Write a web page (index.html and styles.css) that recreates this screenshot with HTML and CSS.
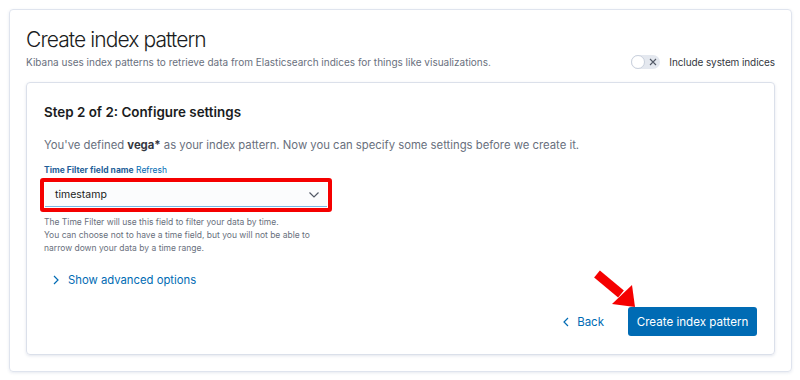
FILE: index.html
```html
<!DOCTYPE html>
<html>
  <head>
    <title>Create index pattern</title>
    <link rel="stylesheet" href="styles.css">
  </head>
  <body>
    <div class="page">
      <div class="header">
        <div>
          <h1 class="title">Create index pattern</h1>
          <p class="subtitle">Kibana uses index patterns to retrieve data from Elasticsearch indices for things like visualizations.</p>
        </div>
        <div class="switch-row">
          <span class="switch">
            <span class="knob"></span>
            <svg class="switch-x" width="8" height="8" viewBox="0 0 8 8"><path d="M1 1L7 7M7 1L1 7" stroke="#535966" stroke-width="1.1" fill="none"/></svg>
          </span>
          <span class="switch-label">Include system indices</span>
        </div>
      </div>

      <div class="panel">
        <h2 class="step">Step 2 of 2: Configure settings</h2>
        <p class="lead">You've defined <b>vega*</b> as your index pattern. Now you can specify some settings before we create it.</p>

        <div class="field">
          <div class="label"><b>Time Filter field name</b> <span class="link">Refresh</span></div>
          <div class="highlight">
            <div class="select">
              <span>timestamp</span>
              <svg width="12" height="8" viewBox="0 0 12 8"><path d="M1.5 1.5L6 6L10.5 1.5" stroke="#535966" stroke-width="1.2" fill="none"/></svg>
            </div>
          </div>
          <div class="help">
            The Time Filter will use this field to filter your data by time.<br>
            You can choose not to have a time field, but you will not be able to<br>
            narrow down your data by a time range.
          </div>
        </div>

        <div class="advanced">
          <svg width="8" height="10" viewBox="0 0 8 10"><path d="M2 1L6 5L2 9" stroke="#006bb4" stroke-width="1.2" fill="none"/></svg>
          <span>Show advanced options</span>
        </div>

        <div class="footer">
          <span class="back">
            <svg width="8" height="10" viewBox="0 0 8 10"><path d="M6 1L2 5L6 9" stroke="#006bb4" stroke-width="1.2" fill="none"/></svg>
            Back
          </span>
          <span class="create">Create index pattern</span>
          <svg class="arrow" width="56" height="50" viewBox="0 0 56 50">
            <line x1="12" y1="11" x2="36" y2="31" stroke="#f50000" stroke-width="9"/>
            <polygon points="50,44 27,41 47,22" fill="#f50000"/>
          </svg>
        </div>
      </div>
    </div>
  </body>
</html>
```

FILE: styles.css
```css
body {
  margin: 0;
  padding: 9px 8px 8px 9px;
  background: #ffffff;
  font-family: Inter, "Noto Sans", sans-serif;
  color: #343741;
}

.page {
  height: 363px;
  box-sizing: border-box;
  padding: 16px 16px 17px 16px;
  border: 1px solid #dfe4ee;
  border-radius: 4px;
  box-shadow: 0 1px 3px rgba(60, 80, 130, 0.12);
}

.header {
  display: flex;
  justify-content: space-between;
  align-items: flex-end;
}

.title {
  margin: 0;
  font-size: 21px;
  font-weight: 300;
  letter-spacing: -0.9px;
  line-height: 28px;
  color: #1a1c21;
}

.subtitle {
  margin: 0;
  font-size: 10px;
  line-height: 16px;
  color: #69707d;
}

.switch-row {
  display: flex;
  align-items: center;
  gap: 9px;
  padding-bottom: 1px;
}

.switch {
  display: flex;
  align-items: center;
  width: 29px;
  height: 14px;
  border-radius: 8px;
  background: #e4e8ef;
}

.knob {
  width: 14px;
  height: 14px;
  box-sizing: border-box;
  border-radius: 50%;
  background: #fff;
  border: 1px solid #c9d0dc;
}

.switch-x {
  margin-left: 4px;
}

.switch-label {
  font-size: 10px;
  letter-spacing: -0.1px;
  color: #343741;
}

.panel {
  margin-top: 12px;
  height: 273px;
  box-sizing: border-box;
  padding: 17px;
  border: 1px solid #dbe0ea;
  border-radius: 4px;
  box-shadow: 0 1px 3px rgba(60, 80, 130, 0.14);
}

.step {
  margin: 2px 0 0;
  font-size: 13.4px;
  font-weight: 600;
  line-height: 20px;
  color: #1a1c21;
}

.lead {
  margin: 14px 0 0;
  font-size: 11.3px;
  line-height: 18px;
  color: #69707d;
}

.lead b {
  color: #343741;
  font-weight: 700;
}

.field {
  margin-top: 10px;
}

.label {
  font-size: 8.5px;
  line-height: 12px;
  color: #006bb4;
}

.label b {
  font-weight: 700;
  color: #1f5f99;
}

.link {
  color: #006bb4;
}

.highlight {
  margin: 2px 0 0 -4px;
  width: 292px;
  box-sizing: border-box;
  border: 4px solid #f50000;
  border-radius: 3px;
  padding: 1px;
}

.select {
  display: flex;
  align-items: center;
  justify-content: space-between;
  height: 23px;
  padding: 0 7px 0 10px;
  background: #fbfcfd;
  border-bottom: 1px solid #79b7e6;
  font-size: 10.5px;
  color: #1a1c21;
}

.help {
  margin-top: 4px;
  font-size: 8.5px;
  line-height: 13px;
  color: #69707d;
}

.advanced {
  display: flex;
  align-items: center;
  gap: 8px;
  margin: 18px 0 0 8px;
  font-size: 11.3px;
  color: #006bb4;
}

.footer {
  display: flex;
  justify-content: flex-end;
  align-items: center;
  gap: 24px;
  margin-top: 20px;
  position: relative;
}

.back {
  display: flex;
  align-items: center;
  gap: 7px;
  font-size: 11.5px;
  color: #006bb4;
}

.create {
  display: flex;
  align-items: center;
  justify-content: center;
  width: 129px;
  height: 29px;
  border-radius: 3px;
  background: #006bb4;
  color: #fff;
  font-size: 11.6px;
}

.arrow {
  position: absolute;
  left: 541px;
  top: -44px;
}
```
